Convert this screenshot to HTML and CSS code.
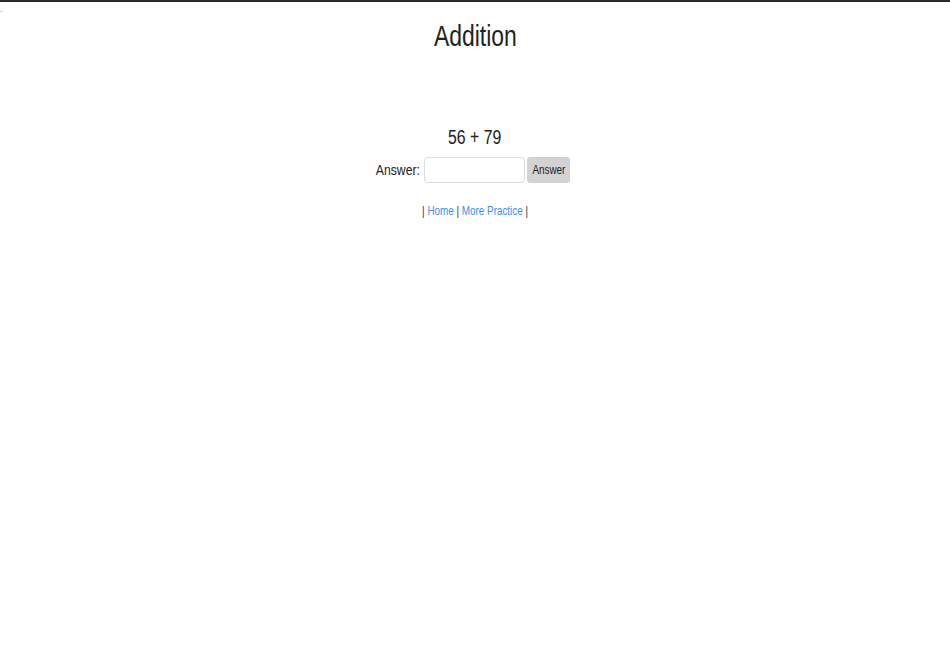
FILE: index.html
```html
<!DOCTYPE html>
<html>
<head>
<meta charset="utf-8">
<link rel="stylesheet" href="styles.css">
</head>
<body>
<div class="topbar"></div>
<div class="mark">-</div>
<h1 class="title"><span class="narrow">Addition</span></h1>
<main class="quiz">
  <div class="problem"><span class="narrow">56 + 79</span></div>
  <form class="answer-row">
    <label class="answer-label"><span class="narrow narrow-right">Answer:</span></label>
    <input class="answer-input" type="text">
    <button class="answer-btn" type="button"><span class="narrow">Answer</span></button>
  </form>
  <nav class="links"><span class="narrow">| <a href="#">Home</a> | <a href="#">More Practice</a> |</span></nav>
</main>
</body>
</html>
```
FILE: styles.css
```css
html, body {
  margin: 0;
  padding: 0;
  background: #fff;
}
body {
  font-family: "Liberation Sans", Arial, sans-serif;
  color: #222;
}
.narrow {
  display: inline-block;
  white-space: nowrap;
  transform: scaleX(0.79);
  transform-origin: center;
}
.narrow-right {
  transform-origin: right center;
}
.topbar {
  height: 2px;
  background: #2b2b2b;
}
.mark {
  font-size: 8px;
  line-height: 8px;
  height: 0;
  color: #888;
  margin-top: 5px;
}
.title {
  margin: 11px 0 0;
  text-align: center;
  font-weight: normal;
  font-size: 29px;
  line-height: 36px;
}
.quiz {
  margin-top: 71px;
  display: flex;
  flex-direction: column;
  align-items: center;
}
.problem {
  font-size: 20px;
  line-height: 24px;
}
.answer-row {
  margin-top: 8px;
  display: flex;
  align-items: center;
  gap: 2px;
  margin-right: 4px;
}
.answer-label {
  font-size: 15.5px;
  width: 44px;
  display: flex;
  justify-content: flex-end;
  margin-right: 2px;
}
.answer-input {
  width: 101px;
  height: 26px;
  box-sizing: border-box;
  border: 1px solid #dcdcdc;
  border-radius: 4px;
  padding: 0 6px;
}
.answer-btn {
  width: 43px;
  height: 26px;
  box-sizing: border-box;
  border: 1px solid #d0d0d0;
  border-radius: 3px;
  background: #d3d3d3;
  font-family: inherit;
  font-size: 12.5px;
  color: #222;
  padding: 0;
  display: flex;
  align-items: center;
  justify-content: center;
}
.links {
  margin-top: 21px;
  font-size: 12.5px;
  color: #333;
}
.links a {
  color: #3b8ef0;
  text-decoration: none;
}
```
